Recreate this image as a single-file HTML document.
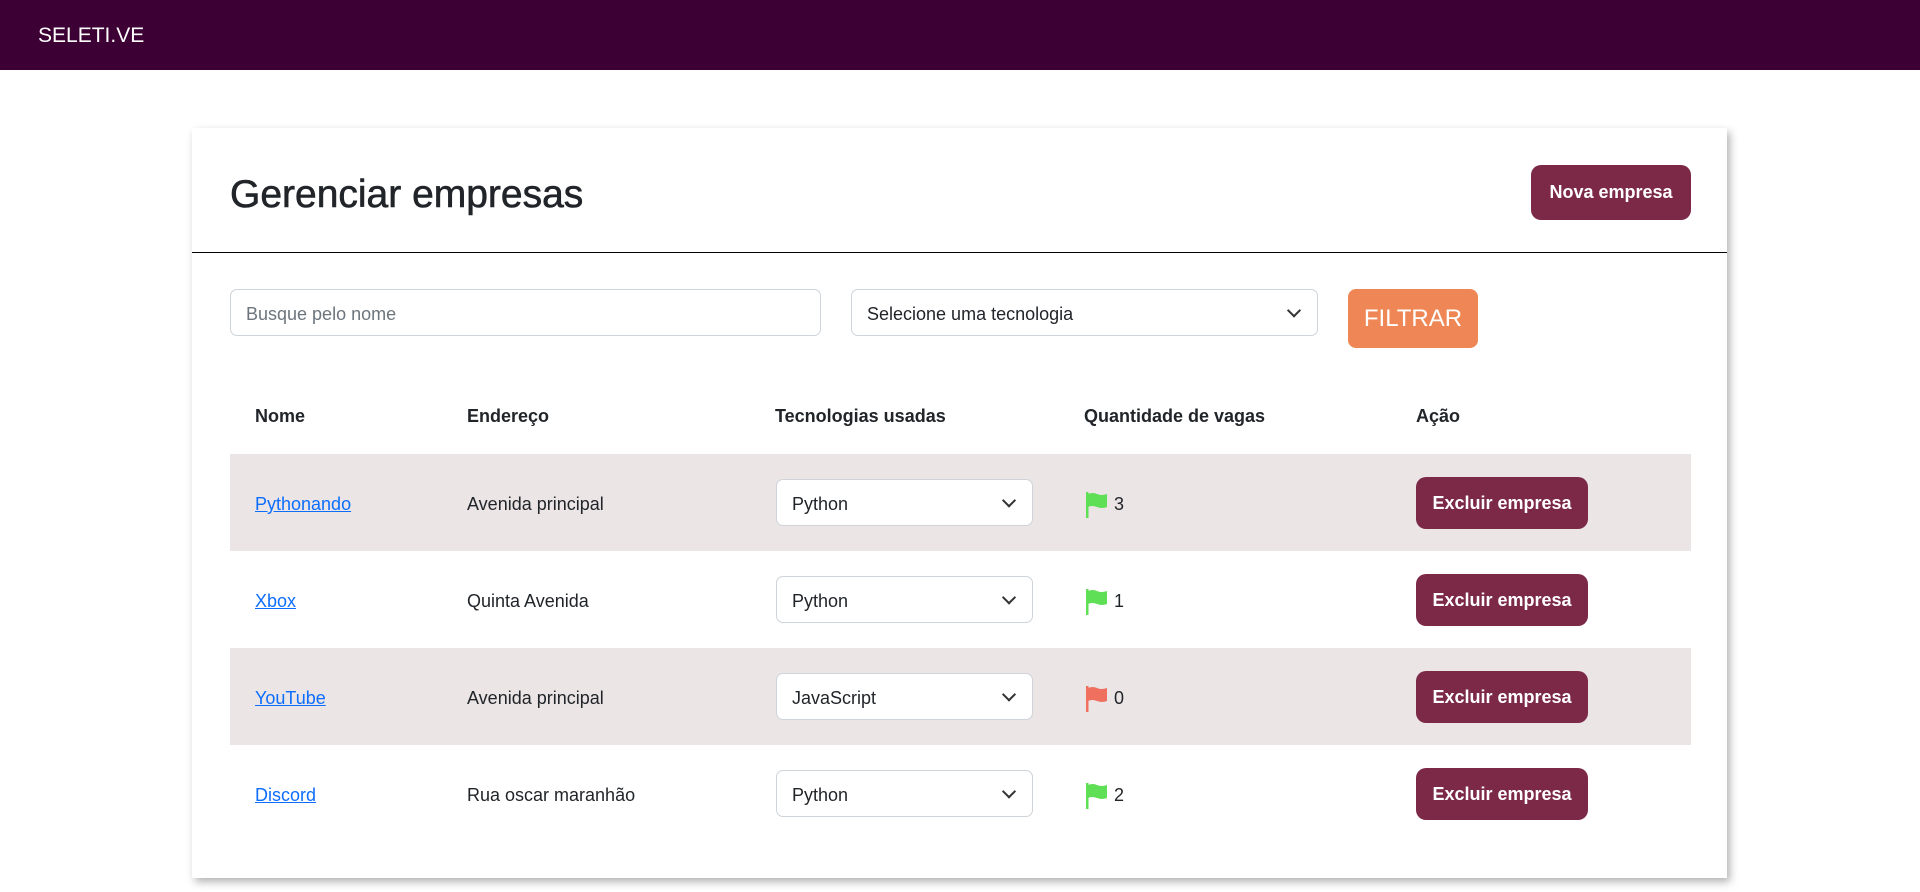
<!DOCTYPE html>
<html><head><meta charset="utf-8"><style>
*{box-sizing:border-box;margin:0;padding:0}
body{width:1920px;height:892px;background:#fff;font-family:"Liberation Sans",sans-serif;color:#212529;position:relative;overflow:hidden}
.nav{position:absolute;left:0;top:0;width:1920px;height:70px;background:#3c0034}
.brand{position:absolute;left:38px;top:23px;color:#fff;font-size:21px;line-height:26px}
.card{position:absolute;left:192px;top:128px;width:1535px;height:750px;background:#fff;box-shadow:3px 4px 8px rgba(0,0,0,.3)}
.title{position:absolute;left:38px;top:42px;font-size:39px;line-height:50px;color:#212529;-webkit-text-stroke:0.6px #212529}
.btn{position:absolute;background:#7c2948;color:#fff;font-weight:bold;font-size:18px;border-radius:10px;display:flex;align-items:center;justify-content:center}
.hr{position:absolute;left:0;top:124px;width:1535px;height:1px;background:#000}
.inp{position:absolute;border:1px solid #ced4da;border-radius:7px;background:#fff;font-size:18px;display:flex;align-items:center;padding-left:15px;padding-top:3px}
.chev{position:absolute;right:18px;top:50%;width:10px;height:10px;border-right:2px solid #333;border-bottom:2px solid #333;transform:translateY(-75%) rotate(45deg)}
.filt{position:absolute;left:1156px;top:161px;width:130px;height:59px;background:#ee8755;color:#fff;font-size:24px;border-radius:8px;display:flex;align-items:center;justify-content:center}
.th{position:absolute;top:276px;font-weight:bold;font-size:18px;line-height:24px}
.row{position:absolute;left:38px;width:1461px;height:97px}
.row.s{background:#ebe5e6}
.c{position:absolute;top:38px;font-size:18px;line-height:24px}
.c a{color:#0d6efd;text-decoration:underline}
.flag{position:absolute;left:856px;top:38px}
</style></head><body>
<div class="nav"><div class="brand">SELETI.VE</div></div>
<div class="card">
<div class="title">Gerenciar empresas</div>
<div class="btn" style="left:1339px;top:37px;width:160px;height:55px">Nova empresa</div>
<div class="hr"></div>
<div class="inp" style="left:38px;top:161px;width:591px;height:47px;color:#6c757d">Busque pelo nome</div>
<div class="inp" style="left:659px;top:161px;width:467px;height:47px">Selecione uma tecnologia<span class="chev"></span></div>
<div class="filt">FILTRAR</div>
<div class="th" style="left:63px">Nome</div>
<div class="th" style="left:275px">Endereço</div>
<div class="th" style="left:583px">Tecnologias usadas</div>
<div class="th" style="left:892px">Quantidade de vagas</div>
<div class="th" style="left:1224px">Ação</div>

<div class="row s" style="top:326px">
<div class="c" style="left:25px"><a>Pythonando</a></div>
<div class="c" style="left:237px">Avenida principal</div>
<div class="inp" style="left:546px;top:25px;width:257px;height:47px">Python<span class="chev"></span></div>
<svg class="flag" width="22" height="26" viewBox="0 0 22 26"><rect x="0" y="0" width="2.5" height="26" fill="#5fdf55"/><path d="M2 2 Q7 0 11 2 T21 2 V15 Q16 17 11 15 T2 15Z" fill="#5fdf55"/></svg>
<div class="c" style="left:884px">3</div>
<div class="btn" style="left:1186px;top:23px;width:172px;height:52px">Excluir empresa</div>
</div>
<div class="row" style="top:423px">
<div class="c" style="left:25px"><a>Xbox</a></div>
<div class="c" style="left:237px">Quinta Avenida</div>
<div class="inp" style="left:546px;top:25px;width:257px;height:47px">Python<span class="chev"></span></div>
<svg class="flag" width="22" height="26" viewBox="0 0 22 26"><rect x="0" y="0" width="2.5" height="26" fill="#5fdf55"/><path d="M2 2 Q7 0 11 2 T21 2 V15 Q16 17 11 15 T2 15Z" fill="#5fdf55"/></svg>
<div class="c" style="left:884px">1</div>
<div class="btn" style="left:1186px;top:23px;width:172px;height:52px">Excluir empresa</div>
</div>
<div class="row s" style="top:520px">
<div class="c" style="left:25px"><a>YouTube</a></div>
<div class="c" style="left:237px">Avenida principal</div>
<div class="inp" style="left:546px;top:25px;width:257px;height:47px">JavaScript<span class="chev"></span></div>
<svg class="flag" width="22" height="26" viewBox="0 0 22 26"><rect x="0" y="0" width="2.5" height="26" fill="#f07060"/><path d="M2 2 Q7 0 11 2 T21 2 V15 Q16 17 11 15 T2 15Z" fill="#f07060"/></svg>
<div class="c" style="left:884px">0</div>
<div class="btn" style="left:1186px;top:23px;width:172px;height:52px">Excluir empresa</div>
</div>
<div class="row" style="top:617px">
<div class="c" style="left:25px"><a>Discord</a></div>
<div class="c" style="left:237px">Rua oscar maranhão</div>
<div class="inp" style="left:546px;top:25px;width:257px;height:47px">Python<span class="chev"></span></div>
<svg class="flag" width="22" height="26" viewBox="0 0 22 26"><rect x="0" y="0" width="2.5" height="26" fill="#5fdf55"/><path d="M2 2 Q7 0 11 2 T21 2 V15 Q16 17 11 15 T2 15Z" fill="#5fdf55"/></svg>
<div class="c" style="left:884px">2</div>
<div class="btn" style="left:1186px;top:23px;width:172px;height:52px">Excluir empresa</div>
</div>
</div>
</body></html>
